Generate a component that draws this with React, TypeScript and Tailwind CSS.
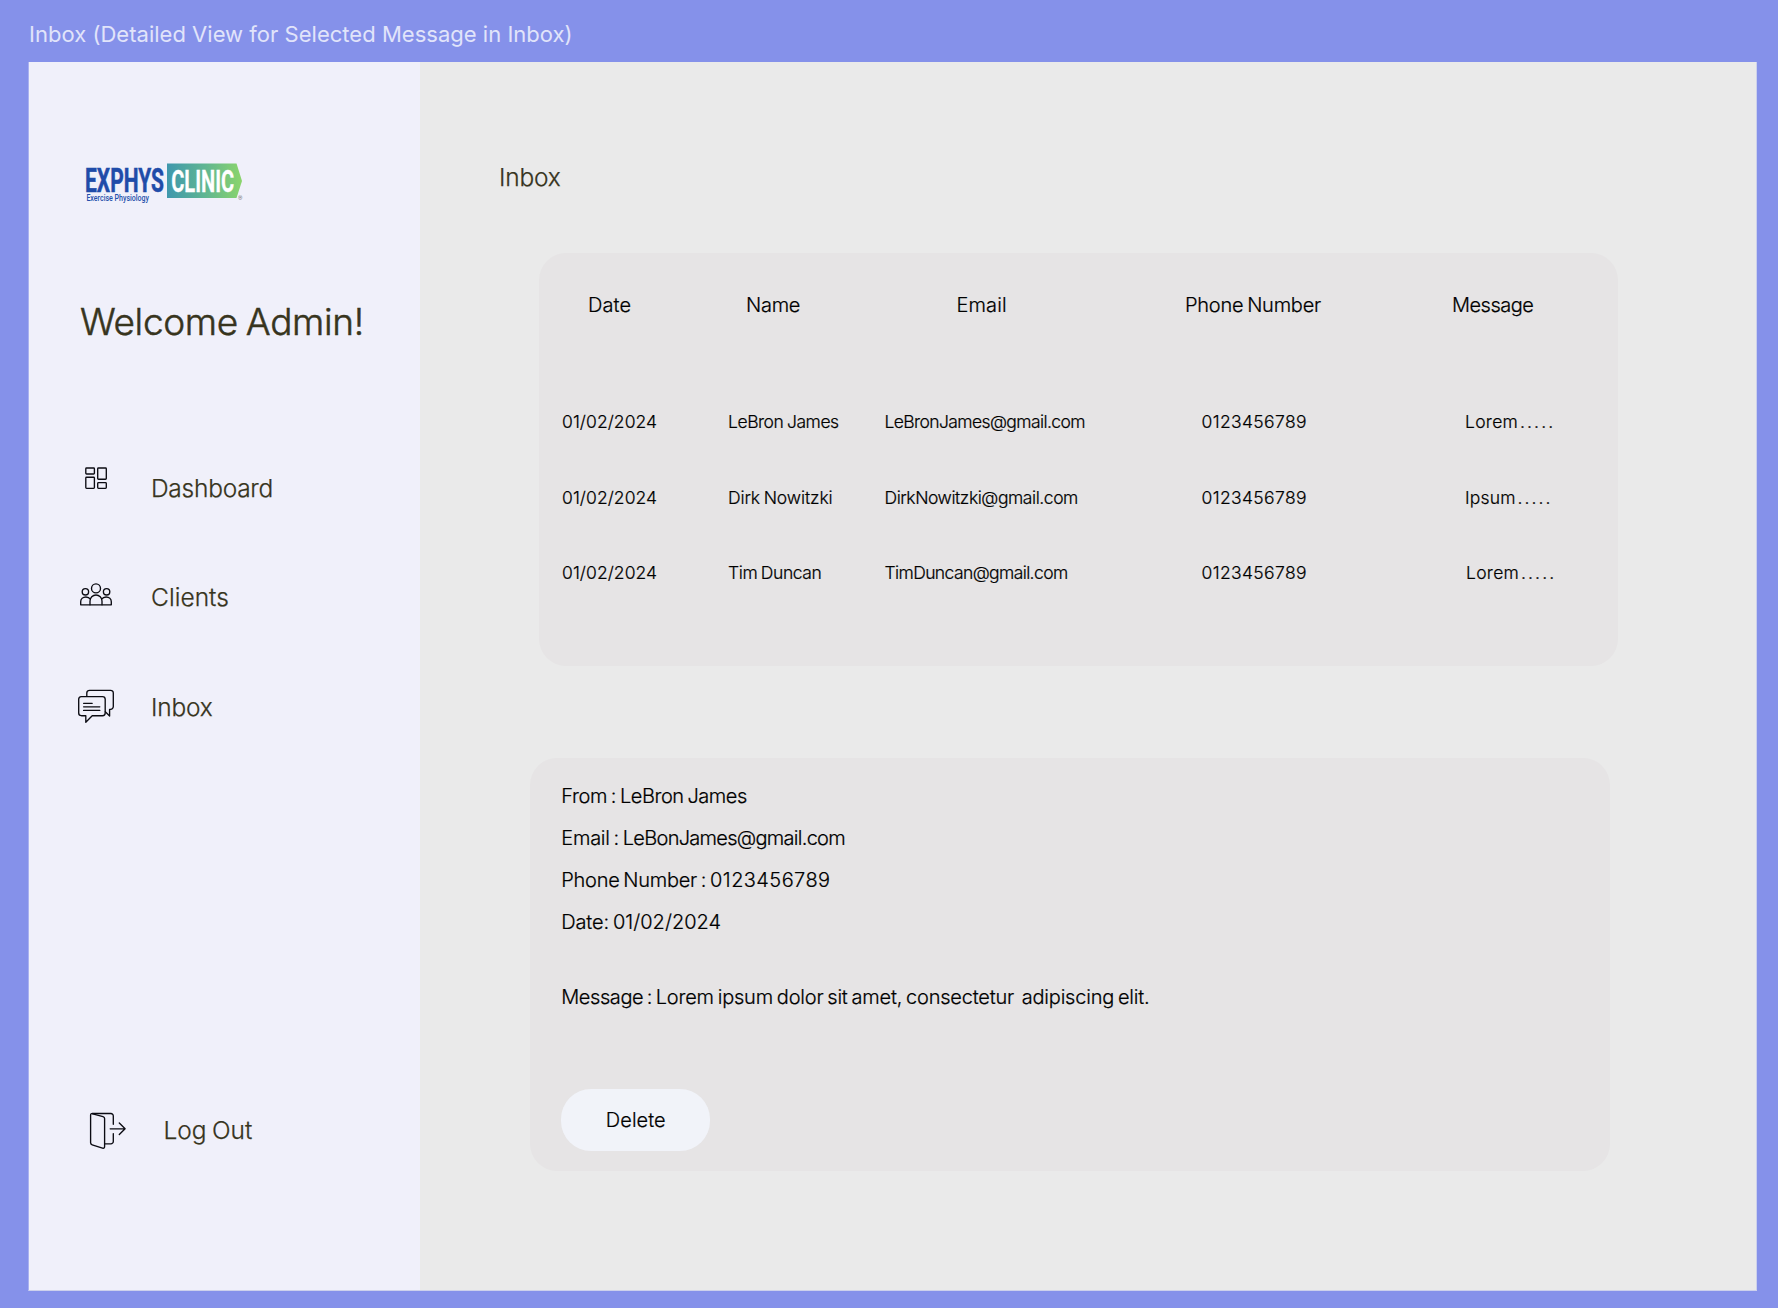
import type { ReactNode } from "react";

function Logo() {
  return (
    <svg className="mt-[98px] ml-[55px] block shrink-0" width="162" height="46" viewBox="84 160 162 46">
      <defs>
        <linearGradient id="clinic" x1="0" y1="0" x2="1" y2="0">
          <stop offset="0" stopColor="#3f98ad" />
          <stop offset="0.5" stopColor="#5fb592" />
          <stop offset="1" stopColor="#8bd56b" />
        </linearGradient>
      </defs>
      <text x="85" y="191.8" fontFamily="Roboto" fontWeight="700" fontSize="32.5" textLength="79" lengthAdjust="spacingAndGlyphs" fill="#1f4ca9" stroke="#1f4ca9" strokeWidth="0.5">EXPHYS</text>
      <path d="M167 163.5H236.5L242 181L236.5 198H167Z" fill="url(#clinic)" />
      <text x="171.2" y="191.6" fontFamily="Roboto" fontWeight="700" fontSize="31.5" textLength="63" lengthAdjust="spacingAndGlyphs" fill="#fff" stroke="#fff" strokeWidth="0.3">CLINIC</text>
      <text x="86.4" y="201.4" fontFamily="Roboto" fontWeight="500" fontSize="9.2" textLength="62.6" lengthAdjust="spacingAndGlyphs" fill="#2450ab" stroke="none">Exercise Physiology</text>
      <text x="238" y="200" fontFamily="Roboto" fontSize="5.5" fill="#333" stroke="none">®</text>
    </svg>
  );
}

function Icon({ children, width = 36 }: { children: ReactNode; width?: number }) {
  return (
    <svg className="-my-[7px] block shrink-0" width={width} height="44" viewBox={`0 0 ${width} 44`} fill="none" stroke="#0b0b12" strokeWidth="1.35" strokeLinecap="round" strokeLinejoin="round">
      {children}
    </svg>
  );
}

function DashboardIcon() {
  return (
    <Icon>
      <rect x="7.8" y="2" width="8.6" height="6" rx="0.8" />
      <rect x="19.7" y="2" width="8.6" height="11.2" rx="0.8" />
      <rect x="7.8" y="11.2" width="8.6" height="11.2" rx="0.8" />
      <rect x="19.7" y="16.6" width="8.6" height="5.8" rx="0.8" />
    </Icon>
  );
}

function ClientsIcon() {
  return (
    <Icon>
      <circle cx="18" cy="13.4" r="4.5" />
      <circle cx="7.4" cy="16.8" r="3.2" />
      <circle cx="28.6" cy="16.8" r="3.2" />
      <path d="M12 29.8V26a6 6 0 0 1 12 0V29.8" />
      <path d="M12.3 24.2C11.4 22.8 9.8 22 7.9 22 5 22 2.7 24 2.7 26.8V29.8H33.3V26.8C33.3 24 31 22 28.1 22 26.2 22 24.6 22.8 23.7 24.2" />
    </Icon>
  );
}

function InboxIcon() {
  return (
    <Icon>
      <path d="M3.3 11.6H24.5a2.7 2.7 0 0 1 2.7 2.7V28a2.7 2.7 0 0 1-2.7 2.7H14.2L7.8 37.2V30.7H3.3A2.7 2.7 0 0 1 .7 28V14.3a2.7 2.7 0 0 1 2.6-2.7Z" />
      <path d="M8.8 11.4V8A2.7 2.7 0 0 1 11.5 5.3H32.6A2.7 2.7 0 0 1 35.3 8V21.6a2.7 2.7 0 0 1-2.7 2.7H31.6V31L27.3 26.8" />
      <path d="M5.6 18.3H14.2M5.6 21.8H21.8M5.6 25.4H21.8" />
    </Icon>
  );
}

function LogOutIcon() {
  return (
    <Icon width={38}>
      <path d="M1.6 7.2C1.6 5.8 2.4 5.3 3.7 5.8L14 8.6C15 8.9 15.6 9.6 15.6 10.6V38.4C15.6 39.9 14.9 40.5 13.5 40.1L3.2 36.8C2.2 36.5 1.6 35.8 1.6 34.8Z" />
      <path d="M3.2 5.5H21.8A2.4 2.4 0 0 1 24.3 7.9V16.2M24.3 25.6V33.4A2.4 2.4 0 0 1 21.8 35.8H15.8" />
      <path d="M21.2 20.8H36M30.3 15L36.1 20.8L30.3 26.6" />
    </Icon>
  );
}

const rows = [
  { name: "LeBron James", nameCls: "tracking-[-0.44px] [word-spacing:-1px]", email: "LeBronJames@gmail.com", emailCls: "tracking-[-0.6px]", message: "Lorem . . . . .", messageCls: "tracking-[0.3px] [word-spacing:-3.4px]" },
  { name: "Dirk Nowitzki", nameCls: "tracking-[-0.12px] [word-spacing:-1px]", email: "DirkNowitzki@gmail.com", emailCls: "tracking-[-0.44px]", message: "Ipsum . . . . .", messageCls: "tracking-[0.18px] [word-spacing:-3.2px]" },
  { name: "Tim Duncan", nameCls: "tracking-[-0.4px] [word-spacing:-1px]", email: "TimDuncan@gmail.com", emailCls: "tracking-[-0.6px]", message: "Lorem . . . . .", messageCls: "pl-px tracking-[0.3px] [word-spacing:-3.4px]" },
];

const details = [
  { label: "From : ", labelCls: "tracking-[-0.36px]", value: "LeBron James", valueCls: "tracking-[-0.43px]" },
  { label: "Email : ", labelCls: "tracking-[-0.26px]", value: "LeBonJames@gmail.com", valueCls: "tracking-[-0.72px]" },
  { label: "Phone Number : ", labelCls: "tracking-[-0.27px]", value: "0123456789", valueCls: "tracking-[0.42px]" },
  { label: "Date: ", labelCls: "tracking-[-0.16px]", value: "01/02/2024", valueCls: "tracking-[0.04px]" },
];

export default function App() {
  return (
    <div className="flex h-[1308px] w-[1778px] flex-col overflow-hidden bg-[#8591ea] font-['Inter',sans-serif] font-light whitespace-pre">
      <div className="mt-[21px] ml-[29px] h-[41px] text-[22px] leading-[26px] font-normal tracking-[0.02px] text-[#e1e4fa]">
        Inbox (Detailed View for Selected Message in Inbox)
      </div>
      <div className="ml-[28px] flex h-[1229px] w-[1729px] border-r border-b border-l border-[#cdd1ec] border-l-[#a9b1f0] bg-[#eaeaea]">
        <aside className="flex w-[391px] shrink-0 flex-col bg-[#f0f0fa] text-[24.5px] leading-[30px] text-[#37341d] [-webkit-text-stroke:0.25px_#37341d]">
          <Logo />
          <h1 className="mt-[92px] ml-[51px] text-[37px] leading-[47px] tracking-[-0.36px] [word-spacing:-2px] [-webkit-text-stroke:0.5px_#37341d]">Welcome Admin!</h1>
          <nav className="mt-[127.5px] ml-[49px] flex flex-col gap-[79.5px]">
            <a className="flex h-[30px] gap-[37px]"><DashboardIcon /><span className="tracking-[-0.25px]">Dashboard</span></a>
            <a className="flex h-[30px] gap-[37px]"><ClientsIcon /><span className="tracking-[0.04px]">Clients</span></a>
            <a className="flex h-[30px] gap-[37px]"><InboxIcon /><span className="tracking-[-0.2px]">Inbox</span></a>
          </nav>
          <a className="mt-[393px] ml-[60px] flex h-[30px] gap-[36.5px]"><LogOutIcon /><span className="tracking-[-0.1px] [word-spacing:-1px]">Log Out</span></a>
        </aside>

        <main className="flex flex-1 flex-col text-black [-webkit-text-stroke:0.2px_#000]">
          <h2 className="mt-[100px] ml-[79px] text-[24.5px] leading-[30px] tracking-[-0.2px] text-[#37341d] [-webkit-text-stroke:0.25px_#37341d]">Inbox</h2>

          <section className="mt-[61px] ml-[119px] h-[413px] w-[1079px] rounded-[27px] bg-[#e6e4e5] pt-[40px]">
            <div className="grid grid-cols-[158px_210.5px_228.5px_267px_1fr] pl-[49px] text-[20px] leading-[24px]">
              <span className="tracking-[0.08px]">Date</span>
              <span className="tracking-[-0.25px]">Name</span>
              <span className="tracking-[0.1px]">Email</span>
              <span className="tracking-[-0.25px] [word-spacing:-1.5px]">Phone Number</span>
              <span className="tracking-[-0.5px]">Message</span>
            </div>
            <div className="mt-[94px] flex flex-col gap-[54.7px] pl-[23px] text-[17.5px] leading-[21px]">
              {rows.map((r) => (
                <div key={r.name} className="grid grid-cols-[166px_156.5px_317px_263.5px_1fr]">
                  <span className="tracking-[0.07px]">01/02/2024</span>
                  <span className={r.nameCls}>{r.name}</span>
                  <span className={r.emailCls}>{r.email}</span>
                  <span className="tracking-[0.36px]">0123456789</span>
                  <span className={r.messageCls}>{r.message}</span>
                </div>
              ))}
            </div>
          </section>

          <section className="mt-[92px] ml-[110px] flex h-[413px] w-[1080px] flex-col items-start rounded-[27px] bg-[#e6e4e5] pt-[25.5px] pl-[31.3px] text-[20px] leading-[24px]">
            <div className="flex flex-col gap-[18px] [word-spacing:-1.5px]">
              {details.map((d) => (
                <p key={d.label}>
                  <span className={d.labelCls}>{d.label}</span>
                  <span className={d.valueCls}>{d.value}</span>
                </p>
              ))}
            </div>
            <p className="mt-[51.5px] [word-spacing:-1.5px]">
              <span className="tracking-[-0.43px]">Message : </span>
              <span className="tracking-[-0.21px]">Lorem ipsum dolor sit amet, consectetur  adipiscing elit.</span>
            </p>
            <button className="mt-[80px] h-[61.5px] w-[149px] rounded-[30px] bg-[#f1f3f9] tracking-[0.05px]">Delete</button>
          </section>
        </main>
      </div>
    </div>
  );
}
